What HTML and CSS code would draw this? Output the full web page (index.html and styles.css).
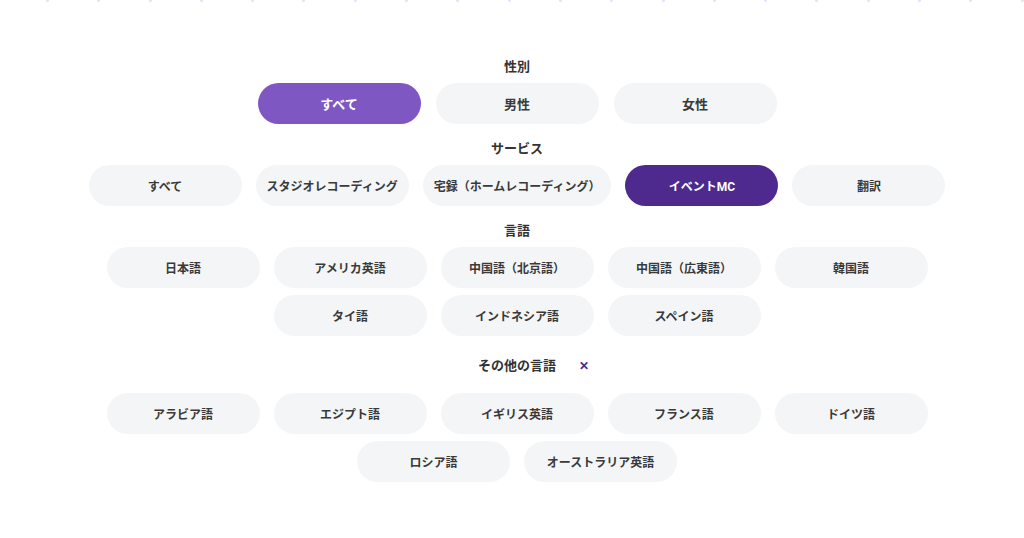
FILE: index.html
```html
<!DOCTYPE html>
<html lang="ja">
<head>
    <meta charset="UTF-8">
    <meta name="viewport" content="width=device-width, initial-scale=1.0">
    <title>検索条件</title>
    <link rel="stylesheet" href="styles.css">
</head>
<body>
    <div class="dots">
        <span></span><span></span><span></span><span></span><span></span><span></span><span></span><span></span><span></span><span></span>
        <span></span><span></span><span></span><span></span><span></span><span></span><span></span><span></span><span></span><span></span>
    </div>

    <div class="filters">
        <div class="filter-group">
            <h3 class="filter-title">性別</h3>
            <div class="chips gender">
                <button class="chip active">すべて</button>
                <button class="chip">男性</button>
                <button class="chip">女性</button>
            </div>
        </div>

        <div class="filter-group">
            <h3 class="filter-title">サービス</h3>
            <div class="chips">
                <button class="chip">すべて</button>
                <button class="chip">スタジオレコーディング</button>
                <button class="chip">宅録（ホームレコーディング）</button>
                <button class="chip selected">イベントMC</button>
                <button class="chip">翻訳</button>
            </div>
        </div>

        <div class="filter-group">
            <h3 class="filter-title">言語</h3>
            <div class="chips grid">
                <button class="chip">日本語</button>
                <button class="chip">アメリカ英語</button>
                <button class="chip">中国語（北京語）</button>
                <button class="chip">中国語（広東語）</button>
                <button class="chip">韓国語</button>
                <button class="chip">タイ語</button>
                <button class="chip">インドネシア語</button>
                <button class="chip">スペイン語</button>
            </div>
        </div>

        <div class="filter-group">
            <div class="other-title">
                <h3 class="filter-title">その他の言語</h3>
                <span class="close">✕</span>
            </div>
            <div class="chips grid">
                <button class="chip">アラビア語</button>
                <button class="chip">エジプト語</button>
                <button class="chip">イギリス英語</button>
                <button class="chip">フランス語</button>
                <button class="chip">ドイツ語</button>
                <button class="chip">ロシア語</button>
                <button class="chip">オーストラリア英語</button>
            </div>
        </div>
    </div>
</body>
</html>
```

FILE: styles.css
```css
body {
    margin: 0;
    background: #fff;
    font-family: Roboto, "Noto Sans CJK JP", sans-serif;
    color: #333;
}
.dots {
    display: flex;
    gap: 48.3px;
    padding-left: 46px;
    height: 3px;
}
.dots span {
    width: 3px;
    height: 2px;
    border-radius: 0 0 2px 2px;
    background: #e6e2fa;
}
.filters {
    display: flex;
    flex-direction: column;
    align-items: center;
    padding: 54px 0 0 10px;
}
.filter-group {
    display: flex;
    flex-direction: column;
    align-items: center;
    margin-bottom: 15px;
}
.filter-title {
    margin: 0 0 6px;
    font-size: 13px;
    line-height: 20px;
    font-weight: 700;
    color: #333;
}
.other-title {
    position: relative;
    margin: 5px 0 17px;
}
.other-title .filter-title {
    margin: 0;
}
.close {
    position: absolute;
    top: 0;
    left: calc(100% + 23px);
    color: #4e2a8e;
    font-size: 12px;
    font-weight: 700;
    line-height: 20px;
}
.chips {
    display: flex;
    justify-content: center;
    gap: 14px;
}
.chips.gender {
    gap: 15px;
}
.chips.grid {
    flex-wrap: wrap;
    width: 822px;
    row-gap: 7px;
}
.chip {
    min-width: 153px;
    height: 41px;
    padding: 0 11px;
    border: none;
    border-radius: 21px;
    background: #f4f5f7;
    color: #3a3a3a;
    font-family: inherit;
    font-size: 12px;
    font-weight: 700;
    cursor: pointer;
}
.gender .chip {
    width: 163px;
    font-size: 13px;
}
.chip.active {
    background: #7e57c2;
    color: #fff;
}
.chip.selected {
    background: #4e2a8e;
    color: #fff;
}
```
